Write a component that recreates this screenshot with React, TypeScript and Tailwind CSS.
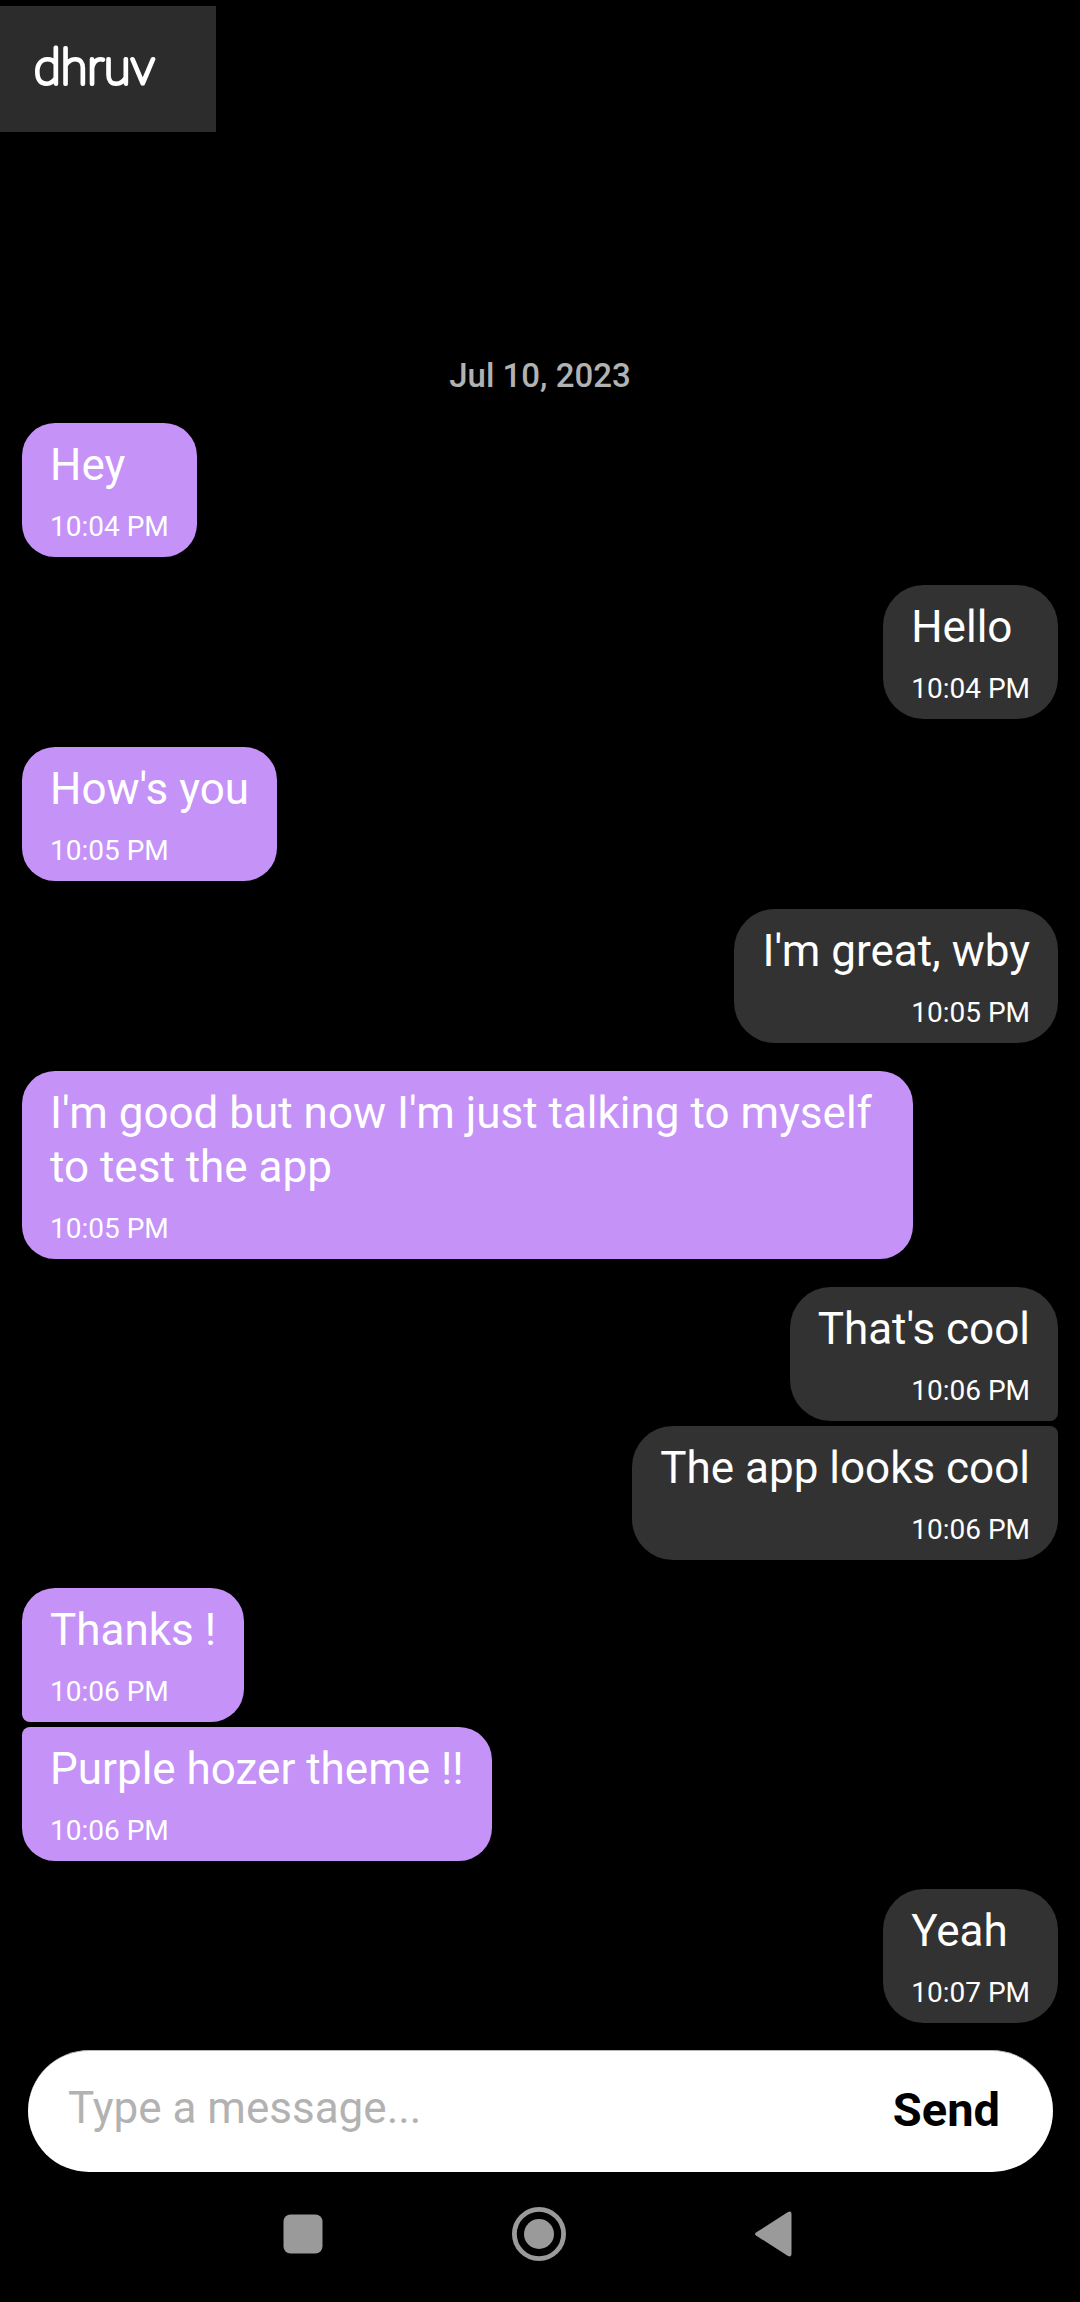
type Message = {
  text: string;
  time: string;
  mine?: boolean;
  /** Joined to the following message of the same sender. */
  joinsNext?: boolean;
  /** Joined to the preceding message of the same sender. */
  joinsPrevious?: boolean;
};

const messages: Message[] = [
  { text: "Hey", time: "10:04 PM" },
  { text: "Hello", time: "10:04 PM", mine: true },
  { text: "How's you", time: "10:05 PM" },
  { text: "I'm great, wby", time: "10:05 PM", mine: true },
  { text: "I'm good but now I'm just talking to myself to test the app", time: "10:05 PM" },
  { text: "That's cool", time: "10:06 PM", mine: true, joinsNext: true },
  { text: "The app looks cool", time: "10:06 PM", mine: true, joinsPrevious: true },
  { text: "Thanks !", time: "10:06 PM", joinsNext: true },
  { text: "Purple hozer theme !!", time: "10:06 PM", joinsPrevious: true },
  { text: "Yeah", time: "10:07 PM", mine: true },
];

function bubbleShape({ mine, joinsNext, joinsPrevious }: Message) {
  if (mine) {
    return `rounded-[41px] bg-[#323232] ${joinsNext ? "rounded-br-lg" : ""} ${joinsPrevious ? "rounded-tr-lg" : ""}`;
  }
  return `rounded-[33px] bg-[#c592f7] ${joinsNext ? "rounded-bl-lg" : ""} ${joinsPrevious ? "rounded-tl-lg" : ""}`;
}

function Bubble({ message }: { message: Message }) {
  return (
    <li
      className={`flex ${message.mine ? "justify-end" : "justify-start"} ${
        message.joinsPrevious ? "mt-[5px]" : "mt-7 first:mt-0"
      }`}
    >
      <div className={`flex max-w-[86%] flex-col gap-[19px] px-7 pt-[15px] pb-3.5 text-white ${bubbleShape(message)}`}>
        <p className="text-[44px] leading-[54px]">{message.text}</p>
        <time className={`text-[28px] leading-8 ${message.mine ? "self-end" : "self-start"}`}>{message.time}</time>
      </div>
    </li>
  );
}

function Header() {
  return (
    <header className="flex pt-1.5">
      <h1 className="bg-[#2c2c2c] py-[23px] pr-[26px] pl-[30px]">
        <svg
          className="h-20 w-40"
          viewBox="0 0 160 80"
          fill="white"
          stroke="white"
          strokeWidth="4"
          strokeLinejoin="round"
        >
          <text x="4" y="55" className="font-['Lato',sans-serif] text-[49px] font-thin">
            dhruv
          </text>
        </svg>
      </h1>
    </header>
  );
}

function Composer() {
  return (
    <form
      className="mr-[27px] ml-7 flex items-center rounded-full border-t border-[#b5b5b5] bg-white py-8 pr-[53px] pl-10"
      onSubmit={(event) => event.preventDefault()}
    >
      <input
        type="text"
        aria-label="Message"
        placeholder="Type a message..."
        className="h-[57px] min-w-0 flex-1 bg-transparent pb-2 text-[44px] text-black outline-none placeholder:text-[#b2b2b2]"
      />
      <button type="submit" className="pb-1 text-[47px] leading-[53px] font-bold text-black">
        Send
      </button>
    </form>
  );
}

function SystemNavigation() {
  return (
    <nav className="flex justify-center gap-[182px] pt-[35px] pr-0.5 pb-[41px] text-[#9a9a9a]">
      <button type="button" aria-label="Recent apps">
        <svg className="size-[54px]" viewBox="0 0 54 54" fill="currentColor">
          <rect x="7.500" y="7.500" width="39" height="39" rx="7" />
        </svg>
      </button>
      <button type="button" aria-label="Home">
        <svg className="size-[54px]" viewBox="0 0 54 54" fill="currentColor">
          <circle cx="27" cy="27" r="24.600" fill="none" stroke="currentColor" strokeWidth="4.800" />
          <circle cx="27" cy="27" r="15" />
        </svg>
      </button>
      <button type="button" aria-label="Back">
        <svg className="size-[54px]" viewBox="0 0 54 54" fill="currentColor">
          <path d="M8 25.500 L40 5 Q43.500 3.500 43.500 7 V47 Q43.500 50.500 40 49 L8 28.500 Q6 27 8 25.500 Z" />
        </svg>
      </button>
    </nav>
  );
}

export default function App() {
  return (
    <div className="flex min-h-screen flex-col bg-black font-['Roboto',sans-serif]">
      <Header />
      <main className="flex flex-1 flex-col justify-end px-[22px] pb-[27px]">
        <h2 className="mb-[27px] text-center text-[33px] leading-10 font-medium text-[#b2b2b2]">Jul 10, 2023</h2>
        <ul>
          {messages.map((message, index) => (
            <Bubble key={index} message={message} />
          ))}
        </ul>
      </main>
      <Composer />
      <SystemNavigation />
    </div>
  );
}
